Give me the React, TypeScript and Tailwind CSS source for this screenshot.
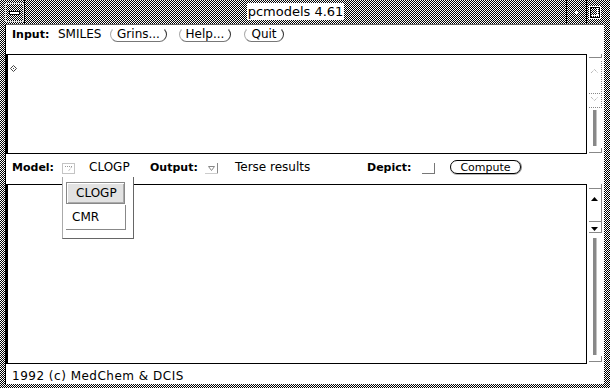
import React from "react";

function Scroll1() {
  return (
    <svg width="17" height="100" viewBox="0 0 17 100" className="block">
      <g stroke="#888" strokeWidth="1" fill="none" shapeRendering="crispEdges">
        <line x1="2" y1="3.5" x2="15" y2="3.5" />
        <line x1="14.5" y1="0" x2="14.5" y2="4" />
        <line x1="14.5" y1="7" x2="14.5" y2="54" strokeDasharray="1 1" />
        <line x1="2" y1="39.5" x2="15" y2="39.5" strokeDasharray="1 1" />
        <line x1="2" y1="53.5" x2="15" y2="53.5" strokeDasharray="1 1" />
        <line x1="2" y1="98.5" x2="15" y2="98.5" />
        <line x1="14.5" y1="94" x2="14.5" y2="99" />
      </g>
      <polyline points="4,19 7.5,15.5 11,19" stroke="#999" strokeWidth="1" fill="none" strokeDasharray="1 1" />
      <polyline points="4,43 7.5,46.5 11,43" stroke="#999" strokeWidth="1" fill="none" strokeDasharray="1 1" />
      <rect x="6" y="56" width="3.5" height="36" fill="#888" />
    </svg>
  );
}

function Scroll2() {
  return (
    <svg width="17" height="180" viewBox="0 0 17 180" className="block">
      <g stroke="#888" strokeWidth="1" fill="none" shapeRendering="crispEdges">
        <line x1="2" y1="4.5" x2="15" y2="4.5" />
        <line x1="14.5" y1="0" x2="14.5" y2="49" />
        <line x1="2" y1="37.5" x2="15" y2="37.5" />
        <line x1="2" y1="48.5" x2="15" y2="48.5" />
        <line x1="2" y1="177.5" x2="15" y2="177.5" />
        <line x1="14.5" y1="172" x2="14.5" y2="178" />
      </g>
      <polygon points="4,17 7.5,13 11,17" fill="#000" />
      <polygon points="4,43 11,43 7.5,47" fill="#000" />
      <rect x="6" y="54" width="3.5" height="117" fill="#888" />
    </svg>
  );
}

export default function App() {
  return (
    <div className="w-[610px] h-[388px] flex flex-col overflow-hidden bg-[image:repeating-linear-gradient(90deg,#000_0px_1px,#fff_1px_2px),repeating-linear-gradient(0deg,#000_0px_1px,#fff_1px_2px)] bg-blend-difference font-['DejaVu_Sans',sans-serif] text-[12px] text-black">
      {/* Title bar */}
      <div className="h-[24px] flex shrink-0">
        <div className="w-[5px]" />
        <div className="mt-[3px] w-[19px] h-[19px] border border-[#d8d8d8] flex items-center justify-center">
          <div className="w-[11px] h-[4px] bg-white border border-black" />
        </div>
        <div className="w-[1px] bg-black" />
        <div className="w-[541px] flex justify-center">
          <div className="mt-[3px] h-[17px] bg-white px-[1px] text-[13px] leading-[17px]">
            pcmodels 4.61
          </div>
        </div>
        <div className="w-[1px] bg-black" />
        <div className="w-[19px] flex items-center justify-center">
          <div className="w-[3px] h-[3px] bg-white" />
        </div>
        <div className="w-[1px] bg-black" />
        <div className="w-[16px] flex items-center justify-center">
          <svg width="12" height="13" viewBox="0 0 12 13" className="block">
            <rect x="0.5" y="0.5" width="11" height="12" fill="none" stroke="#fff" />
            <rect x="1.5" y="1.5" width="9" height="10" fill="none" stroke="#000" />
            <line x1="2" y1="9.5" x2="10" y2="9.5" stroke="#fff" />
            <line x1="8.5" y1="2" x2="8.5" y2="10" stroke="#fff" />
          </svg>
        </div>
        <div className="w-[7px]" />
      </div>

      {/* Window body */}
      <div className="flex h-[360px] shrink-0">
        <div className="w-[5px]" />
        <div className="w-[599px] bg-white border-l border-black border-t border-t-[#666] flex flex-col relative">
          {/* Input row */}
          <div className="h-[29px] flex items-start pt-[2px] pl-[6px] leading-[15px]">
            <div className="w-[46px] font-bold text-[11px]">Input:</div>
            <div className="w-[52px]">SMILES</div>
            <div className="w-[57px] h-[15px] rounded-full border border-t-transparent border-l-[#aaa] border-b-[#777] border-r-[#333] flex items-center justify-center">
              Grins...
            </div>
            <div className="ml-[12px] w-[52px] h-[15px] rounded-full border border-t-transparent border-l-[#aaa] border-b-[#777] border-r-[#333] flex items-center justify-center">
              Help...
            </div>
            <div className="ml-[13px] w-[40px] h-[15px] rounded-full border border-t-transparent border-l-[#aaa] border-b-[#777] border-r-[#333] flex items-center justify-center">
              Quit
            </div>
          </div>

          {/* Text area 1 */}
          <div className="h-[100px] flex">
            <div className="w-[581px] border border-black border-l-2 flex items-start">
              <svg width="7" height="7" viewBox="0 0 7 7" className="block ml-[2px] mt-[10px]">
                <polygon points="3.5,0.5 6.5,3.5 3.5,6.5 0.5,3.5" fill="none" stroke="#444" />
                <rect x="3" y="3" width="1" height="1" fill="#444" />
              </svg>
            </div>
            <div className="w-[17px]">
              <Scroll1 />
            </div>
          </div>

          {/* Model row */}
          <div className="h-[30px] flex items-start pt-[6px] pl-[6px] leading-[15px]">
            <div className="w-[50px] font-bold text-[11px]">Model:</div>
            <svg width="13" height="11" viewBox="0 0 13 11" className="block mt-[3px]">
              <rect x="0.5" y="0.5" width="12" height="10" fill="none" stroke="#888" strokeDasharray="1 1" />
              <polyline points="3,3.5 10,3.5 6.5,8" fill="none" stroke="#999" strokeDasharray="1 1" />
            </svg>
            <div className="ml-[14px] w-[61px]">CLOGP</div>
            <div className="w-[55px] font-bold text-[11px]">Output:</div>
            <svg width="15" height="11" viewBox="0 0 15 11" className="block mt-[3px]">
              <polygon points="3.5,3.5 9.5,3.5 6.5,7.5" fill="none" stroke="#888" />
              <line x1="12.5" y1="0" x2="12.5" y2="11" stroke="#888" />
              <line x1="0" y1="10.5" x2="13" y2="10.5" stroke="#ccc" />
            </svg>
            <div className="ml-[15px] w-[132px]">Terse results</div>
            <div className="w-[55px] font-bold text-[11px]">Depict:</div>
            <svg width="13" height="11" viewBox="0 0 13 11" className="block mt-[3px]">
              <line x1="12.5" y1="0" x2="12.5" y2="11" stroke="#777" />
              <line x1="0" y1="10.5" x2="13" y2="10.5" stroke="#777" />
            </svg>
            <div className="ml-[15px] w-[71px] h-[14px] rounded-full border border-black shadow-[1px_0_0_#888,0_1px_0_#bbb] flex items-center justify-center text-[11px] leading-none">
              Compute
            </div>
          </div>

          {/* Text area 2 */}
          <div className="h-[180px] flex">
            <div className="w-[581px] border border-black border-l-2" />
            <div className="w-[17px]">
              <Scroll2 />
            </div>
          </div>

          {/* Status */}
          <div className="h-[20px] pt-[5px] pl-[6px] leading-[15px] tracking-[0.5px]">
            1992 (c) MedChem &amp; DCIS
          </div>

          {/* Popup menu */}
          <div className="absolute left-[56px] top-[152px] w-[72px] h-[62px] bg-white border-l border-l-[#aaa] border-r border-r-[#666] border-b border-b-[#666] flex flex-col items-start">
            <div className="ml-[3px] mt-[5px] w-[59px] h-[22px] bg-[#e2e2e2] border border-[#888] shadow-[inset_1px_1px_0_#fff,inset_-1px_-1px_0_#aaa] flex items-center pl-[9px] leading-none">
              CLOGP
            </div>
            <div className="ml-[3px] mt-[1px] w-[60px] h-[25px] border-r border-b border-[#888] flex items-center pl-[6px] leading-none">
              CMR
            </div>
          </div>
        </div>
        <div className="w-[6px]" />
      </div>
      <div className="h-[4px] shrink-0" />
    </div>
  );
}
